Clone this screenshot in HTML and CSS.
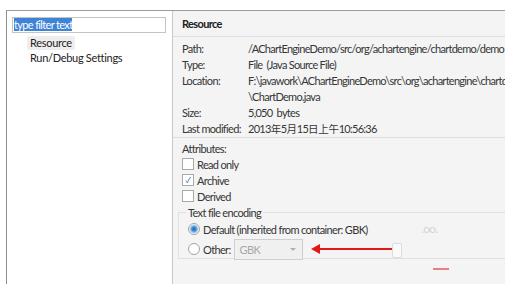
FILE: index.html
```html
<!DOCTYPE html>
<html lang="en">
<head>
    <meta charset="UTF-8">
    <title>Properties for ChartDemo.java</title>
    <link rel="stylesheet" href="styles.css">
</head>
<body>
    <div class="window">
        <div class="nav">
            <div class="filter"><span class="sel">type filter text</span></div>
            <ul class="tree">
                <li class="current">Resource</li>
                <li>Run/Debug Settings</li>
            </ul>
        </div>
        <div class="page">
            <div class="title">Resource</div>
            <div class="info">
                <span class="label">Path:</span>
                <span class="value">/AChartEngineDemo/src/org/achartengine/chartdemo/demo</span>
                <span class="label">Type:</span>
                <span class="value">File&nbsp; (Java Source File)</span>
                <span class="label">Location:</span>
                <span class="value">F:\javawork\AChartEngineDemo\src\org\achartengine\chartdemo<br>\ChartDemo.java</span>
                <span class="label">Size:</span>
                <span class="value">5,050&nbsp; bytes</span>
                <span class="label">Last modified:</span>
                <span class="value">2013<span class="cjk">年</span>5<span class="cjk">月</span>15<span class="cjk">日上午</span>10:56:36</span>
            </div>
            <div class="attrs">
                <div class="line">Attributes:</div>
                <div class="line"><span class="check"></span>Read only</div>
                <div class="line"><span class="check on">&#10003;</span>Archive</div>
                <div class="line"><span class="check"></span>Derived</div>
                <div class="group">
                    <div class="legend">Text file encoding</div>
                    <div class="line"><span class="radio on"></span>Default (inherited from container: GBK)</div>
                    <div class="line other">
                        <span class="radio"></span>Other:
                        <div class="combo">GBK<span class="drop"></span></div>
                        <div class="arrow"></div>
                    </div>
                </div>
            </div>
            <div class="mark dots">.oo.</div>
            <div class="mark tag"></div>
            <div class="mark streak"></div>
        </div>
    </div>
</body>
</html>
```

FILE: styles.css
```css
body {
    margin: 0;
    background: #ffffff;
    font-family: Lato, 'Noto Sans CJK SC', sans-serif;
    font-size: 11px;
    letter-spacing: -0.65px;
    color: #363636;
}

.cjk {
    font-family: 'Noto Sans CJK SC', sans-serif;
    font-size: 10.5px;
    letter-spacing: -0.3px;
}

.window {
    display: flex;
    margin: 10px 0 0 6px;
    width: 499px;
    height: 273px;
    border-top: 1px solid #9c9c9c;
}

.nav {
    width: 165px;
    background: #ffffff;
    border-left: 1px solid #8c8c8c;
    border-right: 1px solid #c8c8c8;
}

.filter {
    margin: 6px 6px 0 5px;
    height: 14px;
    padding: 0 1px;
    border: 1px solid #c4c4c4;
    line-height: 14px;
}

.sel {
    background: #3d83d6;
    color: #ffffff;
}

.tree {
    list-style: none;
    margin: 3px 0 0 20px;
    padding: 0;
    letter-spacing: -0.3px;
}

.tree li {
    line-height: 14px;
    padding: 0 3px;
    margin-bottom: 1px;
    color: #222;
}

.tree .current {
    display: inline-block;
    background: #eeeeee;
    border-radius: 2px;
}

.page {
    flex: 1;
    position: relative;
    background: #f4f4f4;
    overflow: hidden;
}

.title {
    height: 25px;
    line-height: 26px;
    padding-left: 9px;
    font-weight: bold;
    color: #222;
    border-bottom: 1px solid #dedede;
}

.info {
    display: grid;
    grid-template-columns: 66px auto;
    padding: 4px 0 0 9px;
    line-height: 16px;
    border-bottom: 1px solid #dedede;
    white-space: nowrap;
}

.info .value {
    letter-spacing: -0.72px;
}

.attrs {
    padding: 2px 0 0 9px;
}

.line {
    display: flex;
    align-items: center;
    height: 16px;
    white-space: nowrap;
}

.check {
    width: 10px;
    height: 10px;
    margin-right: 3px;
    border: 1px solid #a8a8a8;
    background: #ffffff;
    font-size: 8px;
    line-height: 10px;
    text-align: center;
    color: #2a4fa8;
}

.group {
    margin: 8px 0 0 -4px;
    padding: 0 0 6px 9px;
    border: 1px solid #e0e0e0;
    border-right: none;
    height: 39px;
}

.legend {
    margin: -8px 0 0 -2px;
    padding: 0 2px;
    width: max-content;
    line-height: 16px;
    background: #f4f4f4;
}

.radio {
    width: 10px;
    height: 10px;
    margin-right: 3px;
    border: 1px solid #a4a4a4;
    border-radius: 50%;
    background: #ffffff;
}

.radio.on {
    background: radial-gradient(circle, #2168c4 0, #3d8ad6 2px, #b9d6ef 4px, #ffffff 5px);
}

.other {
    height: 20px;
    margin-top: 2px;
}

.combo {
    position: relative;
    width: 62px;
    height: 19px;
    margin-left: 3px;
    padding-left: 5px;
    border: 1px solid #cfcfcf;
    background: #f0f0f0;
    color: #a8a8a8;
    line-height: 19px;
}

.drop {
    position: absolute;
    right: 6px;
    top: 8px;
    border: 3px solid transparent;
    border-top-color: #b0b0b0;
}

.arrow {
    position: relative;
    width: 76px;
    height: 2px;
    margin-left: 14px;
    background: #e01818;
}

.arrow::before {
    content: "";
    position: absolute;
    left: -6px;
    top: -4px;
    border-top: 5px solid transparent;
    border-bottom: 5px solid transparent;
    border-right: 9px solid #e01818;
}

.mark {
    position: absolute;
}

.dots {
    left: 248px;
    top: 210px;
    color: #d4d4d4;
    font-size: 12px;
}

.tag {
    left: 219px;
    top: 232px;
    width: 8px;
    height: 13px;
    border: 1px solid #dcdcdc;
    border-radius: 2px;
    background: #fafafa;
}

.streak {
    left: 260px;
    top: 257px;
    width: 16px;
    height: 2px;
    background: #e88080;
}
```
